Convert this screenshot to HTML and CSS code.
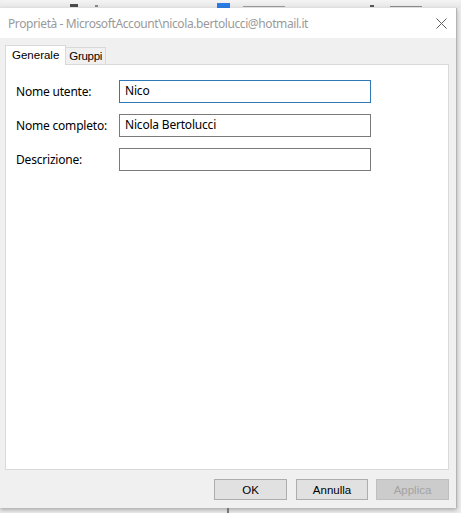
FILE: index.html
```html
<!DOCTYPE html>
<html lang="it">
<head>
<meta charset="utf-8">
<title>Proprietà</title>
<link rel="stylesheet" href="styles.css">
</head>
<body>
<div class="backdrop">
  <span class="bd-mark bd-x"></span>
  <span class="bd-mark bd-a"></span>
  <span class="bd-blue"></span>
  <span class="bd-mark bd-b"></span>
  <span class="bd-mark bd-c"></span>
  <span class="bd-mark bd-d"></span>
</div>
<div class="dialog">
  <div class="titlebar">
    <span class="title">Proprietà - MicrosoftAccount\nicola.bertolucci@hotmail.it</span>
    <svg class="close" width="11" height="11" viewBox="0 0 11 11"><path d="M0.5 0.5 L10.5 10.5 M10.5 0.5 L0.5 10.5" stroke="#5f5f5f" stroke-width="1" fill="none"/></svg>
  </div>
  <div class="content">
    <div class="tabs">
      <div class="tab active">Generale</div>
      <div class="tab">Gruppi</div>
    </div>
    <div class="panel">
      <div class="form">
        <label class="lbl">Nome utente:</label>
        <div class="field focus">Nico</div>
        <label class="lbl">Nome completo:</label>
        <div class="field">Nicola Bertolucci</div>
        <label class="lbl">Descrizione:</label>
        <div class="field"></div>
      </div>
    </div>
    <div class="buttons">
      <button class="btn">OK</button>
      <button class="btn btn-mid">Annulla</button>
      <button class="btn disabled">Applica</button>
    </div>
  </div>
</div>
<div class="below"><span class="below-line"></span></div>
</body>
</html>
```

FILE: styles.css
```css
html, body {
  margin: 0;
  padding: 0;
}
body {
  width: 461px;
  height: 513px;
  overflow: hidden;
  background: #ececec;
  font-family: "Liberation Sans", Arial, sans-serif;
}
.backdrop {
  height: 8px;
  position: relative;
  background: linear-gradient(#f4f4f4, #e6e6e6);
}
.bd-mark {
  position: absolute;
  bottom: 1px;
  height: 2px;
  background: #6a6a6a;
}
.bd-x { left: 70px; width: 8px; height: 3px; background: #4a4a4a; }
.bd-a { left: 95px; width: 3px; background: #888; }
.bd-blue {
  position: absolute;
  left: 217px;
  top: 3px;
  width: 13px;
  height: 5px;
  background: #2c7be0;
}
.bd-b { left: 243px; width: 42px; background: #9a9a9a; height: 1px; }
.bd-c { left: 370px; width: 4px; background: #555; }
.bd-d { left: 390px; width: 32px; background: #8a8a8a; height: 1px; }

.dialog {
  width: 456px;
  height: 500px;
  background: #f0f0f0;
  border-right: 1px solid #b4b4b4;
  box-shadow: 0 2px 4px rgba(0,0,0,0.28);
  position: relative;
  display: flex;
  flex-direction: column;
}
.titlebar {
  height: 30px;
  background: #ffffff;
  display: flex;
  align-items: center;
  justify-content: space-between;
  padding: 0 9px 0 8px;
}
.title {
  font-family: "Noto Sans", "Liberation Sans", sans-serif;
  font-size: 12px;
  color: #9a9a9a;
  letter-spacing: -0.4px;
}
.close {
  display: block;
  margin-top: 1px;
}
.content {
  flex: 1;
  display: flex;
  flex-direction: column;
  padding: 7px 7px 8px 5px;
}
.tabs {
  display: flex;
  align-items: flex-end;
  height: 19px;
}
.tab {
  height: 16px;
  padding: 0 3px;
  font-size: 11.5px;
  line-height: 18px;
  color: #000;
  border: 1px solid #d9d9d9;
  border-bottom: 0;
  background: #f0f0f0;
  letter-spacing: -0.3px;
}
.tab.active {
  height: 19px;
  padding: 0 6px;
  background: #ffffff;
  line-height: 19px;
  margin-bottom: -1px;
  position: relative;
  z-index: 1;
  letter-spacing: 0;
}
.tab + .tab {
  border-left: 0;
  line-height: 17px;
}
.panel {
  background: #ffffff;
  border: 1px solid #d9d9d9;
  padding: 15px 10px 0 10px;
  box-sizing: border-box;
  height: 406px;
}
.form {
  display: grid;
  grid-template-columns: 103px 252px;
  grid-auto-rows: 23px;
  row-gap: 11px;
  align-items: center;
}
.lbl {
  font-family: "Noto Sans", "Liberation Sans", sans-serif;
  font-size: 12px;
  color: #000;
  letter-spacing: -0.2px;
}
.field {
  height: 23px;
  box-sizing: border-box;
  border: 1px solid #7a7a7a;
  padding: 0 5px;
  font-family: "Noto Sans", "Liberation Sans", sans-serif;
  font-size: 12px;
  line-height: 20px;
  color: #000;
  letter-spacing: -0.2px;
}
.field.focus {
  border-color: #3079b8;
}
.buttons {
  display: flex;
  justify-content: flex-end;
  margin-top: 9px;
  gap: 9px;
}
.btn {
  width: 73px;
  height: 21px;
  margin: 0;
  padding: 0;
  background: #e1e1e1;
  border: 1px solid #adadad;
  font-family: "Liberation Sans", Arial, sans-serif;
  font-size: 11.5px;
  color: #000;
}
.btn-mid {
  width: 72px;
  margin-right: -1px;
}
.btn.disabled {
  background: #cccccc;
  border-color: #bfbfbf;
  color: #a3a3a3;
}
.below {
  height: 5px;
  position: relative;
}
.below-line {
  position: absolute;
  left: 227px;
  top: 0;
  width: 2px;
  height: 5px;
  background: #777;
}
```
